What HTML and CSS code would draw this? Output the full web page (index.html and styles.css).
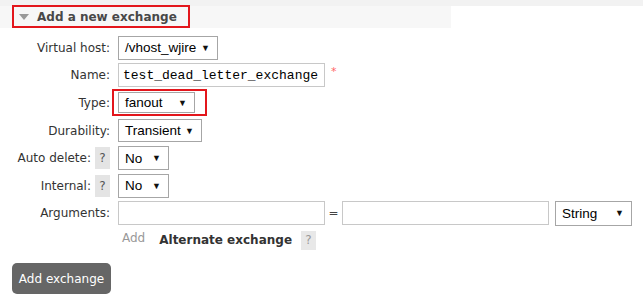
FILE: index.html
```html
<!DOCTYPE html>
<html lang="en">
<head>
    <meta charset="UTF-8">
    <title>Add a new exchange</title>
    <link rel="stylesheet" href="styles.css">
</head>
<body>

<div class="topbar"></div>

<div class="section">
    <div class="section-head">
        <span class="title-box"><span class="tri"></span>Add a new exchange</span>
    </div>

    <!-- exchange form -->
    <div class="form">
        <div class="row">
            <div class="label">Virtual host:</div>
            <div class="ctl"><span class="sel w-vhost">/vhost_wjire<span class="caret">&#9660;</span></span></div>
        </div>
        <div class="row">
            <div class="label">Name:</div>
            <div class="ctl"><span class="inp mono">test_dead_letter_exchange</span><span class="req">*</span></div>
        </div>
        <div class="row">
            <div class="label">Type:</div>
            <div class="ctl"><span class="mark"><span class="sel w-type">fanout<span class="caret">&#9660;</span></span></span></div>
        </div>
        <div class="row">
            <div class="label">Durability:</div>
            <div class="ctl"><span class="sel w-dur">Transient<span class="caret">&#9660;</span></span></div>
        </div>
        <div class="row">
            <div class="label">Auto delete: <span class="help">?</span></div>
            <div class="ctl"><span class="sel w-no">No<span class="caret">&#9660;</span></span></div>
        </div>
        <div class="row">
            <div class="label">Internal: <span class="help">?</span></div>
            <div class="ctl"><span class="sel w-no">No<span class="caret">&#9660;</span></span></div>
        </div>
        <div class="row">
            <div class="label">Arguments:</div>
            <div class="ctl">
                <span class="inp"></span>
                <span class="eq">=</span>
                <span class="inp"></span>
                <span class="sel w-str">String<span class="caret">&#9660;</span></span>
            </div>
        </div>
        <div class="extra">
            <span class="add-link">Add</span>
            <span class="alt">Alternate exchange</span>
            <span class="help light">?</span>
        </div>
    </div>

    <button type="button" class="btn">Add exchange</button>
</div>

</body>
</html>
```

FILE: styles.css
```css
body {
    margin: 0;
    font-family: "DejaVu Sans", Verdana, sans-serif;
    font-size: 12px;
    color: #333;
    background-color: #fff;
}
.topbar {
    height: 6px;
    background-color: #f2f2f2;
}
.section-head {
    width: 451px;
    height: 22px;
    background-color: #f7f7f7;
    display: flex;
    padding-left: 12px;
    box-sizing: border-box;
}
.title-box {
    display: inline-flex;
    align-items: center;
    box-sizing: border-box;
    height: 23px;
    margin-top: -1px;
    width: 178px;
    padding-left: 5px;
    border: 2px solid #e3161c;
    font-size: 12px;
    font-weight: bold;
    color: #484848;
    white-space: nowrap;
}
.tri {
    flex: none;
    width: 0;
    height: 0;
    border-left: 5px solid transparent;
    border-right: 5px solid transparent;
    border-top: 6px solid #999;
    margin-right: 8px;
}
.form {
    padding-top: 6px;
}
.row {
    display: flex;
    align-items: center;
    height: 27.6px;
}
.label {
    width: 110px;
    text-align: right;
    padding-right: 8px;
    box-sizing: content-box;
    display: flex;
    justify-content: flex-end;
    align-items: center;
    gap: 4px;
    white-space: nowrap;
}
.ctl {
    display: flex;
    align-items: center;
}
.sel {
    display: inline-flex;
    align-items: center;
    justify-content: space-between;
    box-sizing: border-box;
    height: 24px;
    padding: 0 7px 0 6px;
    border: 1px solid #a6a6a6;
    background-color: #fff;
    font-family: "Liberation Sans", Arial, sans-serif;
    font-size: 13.5px;
    color: #000;
}
.caret {
    font-size: 9px;
    color: #111;
}
.w-vhost { width: 100px; }
.w-type { width: 77px; height: 21px; }
.w-dur { width: 84px; height: 23px; }
.w-no { width: 51px; }
.w-str { width: 77px; height: 25px; margin-left: 6px; }
.inp {
    display: inline-flex;
    align-items: center;
    box-sizing: border-box;
    width: 207px;
    height: 24px;
    padding-left: 4px;
    border: 1px solid #c8c8c8;
    background-color: #fff;
}
.mono {
    font-family: "Liberation Mono", "Courier New", monospace;
    font-size: 13px;
    color: #000;
}
.req {
    color: #f66;
    font-size: 11px;
    margin-left: 6px;
    margin-top: -8px;
}
.mark {
    display: inline-flex;
    margin-left: -6px;
    padding: 1px 10px 1px 4px;
    border: 2px solid #e3161c;
}
.help {
    display: inline-flex;
    align-items: center;
    justify-content: center;
    width: 15px;
    height: 22px;
    background-color: #e4e4e4;
    color: #555;
    font-size: 12px;
}
.help.light {
    color: #999;
    background-color: #e8e8e8;
    height: 19px;
}
.eq {
    width: 17px;
    text-align: center;
    color: #444;
}
.extra {
    display: flex;
    align-items: center;
    height: 22px;
    margin-top: 2px;
    padding-left: 122px;
}
.add-link {
    color: #999;
    margin-right: 14px;
    margin-top: -4px;
}
.alt {
    font-weight: bold;
    margin-right: 9px;
}
.btn {
    margin: 12px 0 0 12px;
    width: 99px;
    height: 31px;
    background-color: #666;
    color: #fff;
    border: none;
    border-radius: 5px;
    font-family: "DejaVu Sans", Verdana, sans-serif;
    font-size: 12px;
    padding: 0;
}
```
